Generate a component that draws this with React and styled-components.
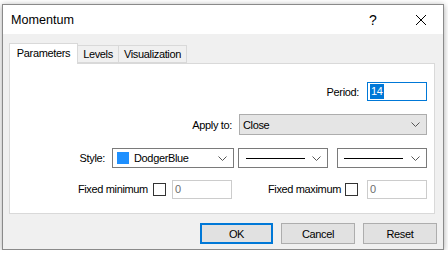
import React from "react";
import styled, { createGlobalStyle } from "styled-components";

const Global = createGlobalStyle`
  html, body { margin: 0; padding: 0; background: #ffffff; }
  body { font-family: "Liberation Sans", Arial, sans-serif; font-size: 11px; letter-spacing: -0.35px; color: #000; }
  * { box-sizing: border-box; }
`;

const Window = styled.div`
  margin: 4px 0 0 2px;
  width: 442px;
  height: 246px;
  border: 1px solid #8a8a8a;
  background: #f0f0f0;
  box-shadow: 0 1px 6px rgba(0, 0, 0, 0.35);
  display: flex;
  flex-direction: column;
`;

const TitleBar = styled.div`
  height: 29px;
  background: #ffffff;
  display: flex;
  align-items: center;
  padding-left: 8px;
`;

const Title = styled.div`
  flex: 1;
  font-size: 12.6px;
  letter-spacing: 0;
  color: #000;
`;

const Help = styled.div`
  width: 14px;
  font-size: 14px;
  letter-spacing: 0;
  margin-right: 35px;
  text-align: center;
  color: #000;
`;

const Close = styled.div`
  width: 12px;
  height: 12px;
  margin-right: 16px;
  display: flex;
`;

const Body = styled.div`
  flex: 1;
  display: flex;
  flex-direction: column;
  padding: 8px 8px 0 6px;
`;

const TabRow = styled.div`
  display: flex;
  align-items: flex-end;
  height: 21px;
  position: relative;
  z-index: 1;
`;

const Tab = styled.div`
  width: ${(p) => p.$w}px;
  height: ${(p) => (p.$active ? 21 : 18)}px;
  margin-left: ${(p) => (p.$first ? 0 : -1)}px;
  margin-bottom: ${(p) => (p.$active ? -1 : 0)}px;
  background: ${(p) => (p.$active ? "#ffffff" : "#f0f0f0")};
  border: 1px solid #d9d9d9;
  border-bottom: ${(p) => (p.$active ? "none" : "1px solid #d9d9d9")};
  display: flex;
  align-items: center;
  justify-content: center;
  padding-bottom: ${(p) => (p.$active ? 2 : 0)}px;
  position: relative;
  z-index: ${(p) => (p.$active ? 2 : 1)};
`;

const Panel = styled.div`
  width: 426px;
  height: 151px;
  background: #ffffff;
  border: 1px solid #d9d9d9;
  display: flex;
  flex-direction: column;
  padding: 18px 7px 0 0;
`;

const Row = styled.div`
  display: flex;
  align-items: center;
  justify-content: flex-end;
  height: ${(p) => p.$h}px;
  margin-top: ${(p) => p.$mt || 0}px;
`;

const Label = styled.span`
  margin-right: ${(p) => p.$gap}px;
  white-space: nowrap;
`;

const TextBox = styled.div`
  width: 60px;
  height: 19px;
  border: 1px solid ${(p) => (p.$focus ? "#0078d7" : "#cccccc")};
  background: #ffffff;
  display: flex;
  align-items: center;
  padding-left: 2px;
  color: ${(p) => (p.$disabled ? "#6d6d6d" : "#000")};
`;

const Selected = styled.span`
  background: #0078d7;
  color: #ffffff;
  padding: 0 1px;
  line-height: 15px;
`;

const Select = styled.div`
  width: ${(p) => p.$w}px;
  height: ${(p) => p.$h}px;
  margin-left: ${(p) => p.$ml || 0}px;
  border: 1px solid ${(p) => (p.$flat ? "#adadad" : "#7a7a7a")};
  background: ${(p) => (p.$flat ? "#e5e5e5" : "#ffffff")};
  display: flex;
  align-items: center;
  padding: 0 6px 0 ${(p) => p.$pl}px;
`;

const SelectValue = styled.div`
  flex: 1;
  display: flex;
  align-items: center;
  gap: 5px;
`;

const Swatch = styled.span`
  width: 12px;
  height: 12px;
  background: #1e90ff;
`;

const LineSample = styled.span`
  width: 59px;
  height: 1px;
  background: #000;
`;

const Checkbox = styled.span`
  width: 13px;
  height: 13px;
  border: 1px solid #333333;
  background: #ffffff;
  margin-right: ${(p) => p.$gap}px;
`;

const Group = styled.div`
  display: flex;
  align-items: center;
  margin-right: ${(p) => p.$mr || 0}px;
`;

const Buttons = styled.div`
  display: flex;
  justify-content: flex-end;
  gap: 8px;
  margin-top: 9px;
  margin-right: -2px;
`;

const Button = styled.div`
  width: ${(p) => p.$w}px;
  height: 21px;
  background: #e1e1e1;
  border: ${(p) => (p.$default ? "2px solid #0078d7" : "1px solid #adadad")};
  display: flex;
  align-items: center;
  justify-content: center;
`;

const Chevron = () => (
  <svg width="9" height="5" viewBox="0 0 9 5">
    <polyline points="0.5,0.5 4.5,4.5 8.5,0.5" fill="none" stroke="#555" strokeWidth="1" />
  </svg>
);

export default function App() {
  return (
    <>
      <Global />
      <Window>
        <TitleBar>
          <Title>Momentum</Title>
          <Help>?</Help>
          <Close>
            <svg width="12" height="12" viewBox="0 0 12 12">
              <path d="M1 1 L11 11 M11 1 L1 11" stroke="#000" strokeWidth="1" />
            </svg>
          </Close>
        </TitleBar>
        <Body>
          <TabRow>
            <Tab $w={69} $active $first>Parameters</Tab>
            <Tab $w={42}>Levels</Tab>
            <Tab $w={69}>Visualization</Tab>
          </TabRow>
          <Panel>
            <Row $h={19}>
              <Label $gap={8}>Period:</Label>
              <TextBox $focus>
                <Selected>14</Selected>
              </TextBox>
            </Row>
            <Row $h={21} $mt={13}>
              <Label $gap={7}>Apply to:</Label>
              <Select $w={188} $h={21} $pl={3} $flat>
                <SelectValue>Close</SelectValue>
                <Chevron />
              </Select>
            </Row>
            <Row $h={20} $mt={13}>
              <Label $gap={7}>Style:</Label>
              <Select $w={122} $h={20} $pl={4}>
                <SelectValue>
                  <Swatch />
                  DodgerBlue
                </SelectValue>
                <Chevron />
              </Select>
              <Select $w={90} $h={20} $pl={7} $ml={4}>
                <SelectValue>
                  <LineSample />
                </SelectValue>
                <Chevron />
              </Select>
              <Select $w={90} $h={20} $pl={6} $ml={9}>
                <SelectValue>
                  <LineSample />
                </SelectValue>
                <Chevron />
              </Select>
            </Row>
            <Row $h={20} $mt={11}>
              <Group $mr={36}>
                <Label $gap={5}>Fixed minimum</Label>
                <Checkbox $gap={6} />
                <TextBox $disabled>0</TextBox>
              </Group>
              <Group>
                <Label $gap={4}>Fixed maximum</Label>
                <Checkbox $gap={9} />
                <TextBox $disabled>0</TextBox>
              </Group>
            </Row>
          </Panel>
          <Buttons>
            <Button $w={73} $default>OK</Button>
            <Button $w={74}>Cancel</Button>
            <Button $w={74}>Reset</Button>
          </Buttons>
        </Body>
      </Window>
    </>
  );
}
